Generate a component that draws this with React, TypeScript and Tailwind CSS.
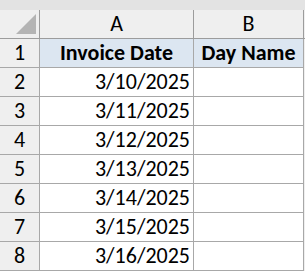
import React from "react";

const dates = ["3/10/2025", "3/11/2025", "3/12/2025", "3/13/2025", "3/14/2025", "3/15/2025", "3/16/2025"];

export default function App() {
  const font = { fontFamily: "Calibri, Carlito, 'Open Sans', sans-serif" };
  return (
    <div className="w-[305px] h-[272px] bg-white overflow-hidden text-black" style={font}>
      <div className="h-[10px] bg-[#e3e3e3]" />
      <div className="grid grid-cols-[40px_154px_110px_1px]">
        {/* header row */}
        <div className="h-[29px] bg-[#efefef] border-r border-b border-[#9c9c9c] relative">
          <svg className="absolute left-[16px] top-[4px]" width="20" height="20" viewBox="0 0 20 20">
            <polygon points="20,0 20,20 0,20" fill="#b4b4b4" />
          </svg>
        </div>
        <div className="h-[29px] bg-[#efefef] border-r border-b border-[#9c9c9c] flex items-center justify-center text-[22px] leading-none">A</div>
        <div className="h-[29px] bg-[#efefef] border-r border-b border-[#9c9c9c] flex items-center justify-center text-[22px] leading-none">B</div>
        <div className="h-[29px] bg-[#efefef] border-b border-[#9c9c9c]" />
        {/* row 1 */}
        <div className="h-[29px] bg-[#efefef] border-r border-b border-[#a8a8a8] flex items-center justify-center text-[22px] leading-none">1</div>
        <div className="h-[29px] bg-[#dce6f1] border-r border-b border-[#a8a8a8] flex items-center justify-center text-[22px] font-bold leading-none">Invoice Date</div>
        <div className="h-[29px] bg-[#dce6f1] border-r border-b border-[#a8a8a8] flex items-center justify-center text-[22px] font-bold leading-none">Day Name</div>
        <div className="h-[29px] bg-[#efefef]" />
        {dates.map((d, i) => (
          <React.Fragment key={d}>
            <div className="h-[29px] bg-[#efefef] border-r border-b border-[#a8a8a8] flex items-center justify-center text-[22px] leading-none">{i + 2}</div>
            <div className="h-[29px] bg-white border-r border-b border-[#a8a8a8] flex items-center justify-end pr-[3px] text-[22px] leading-none">{d}</div>
            <div className="h-[29px] bg-white border-r border-b border-[#a8a8a8]" />
            <div className="h-[29px] bg-[#efefef]" />
          </React.Fragment>
        ))}
      </div>
    </div>
  );
}
